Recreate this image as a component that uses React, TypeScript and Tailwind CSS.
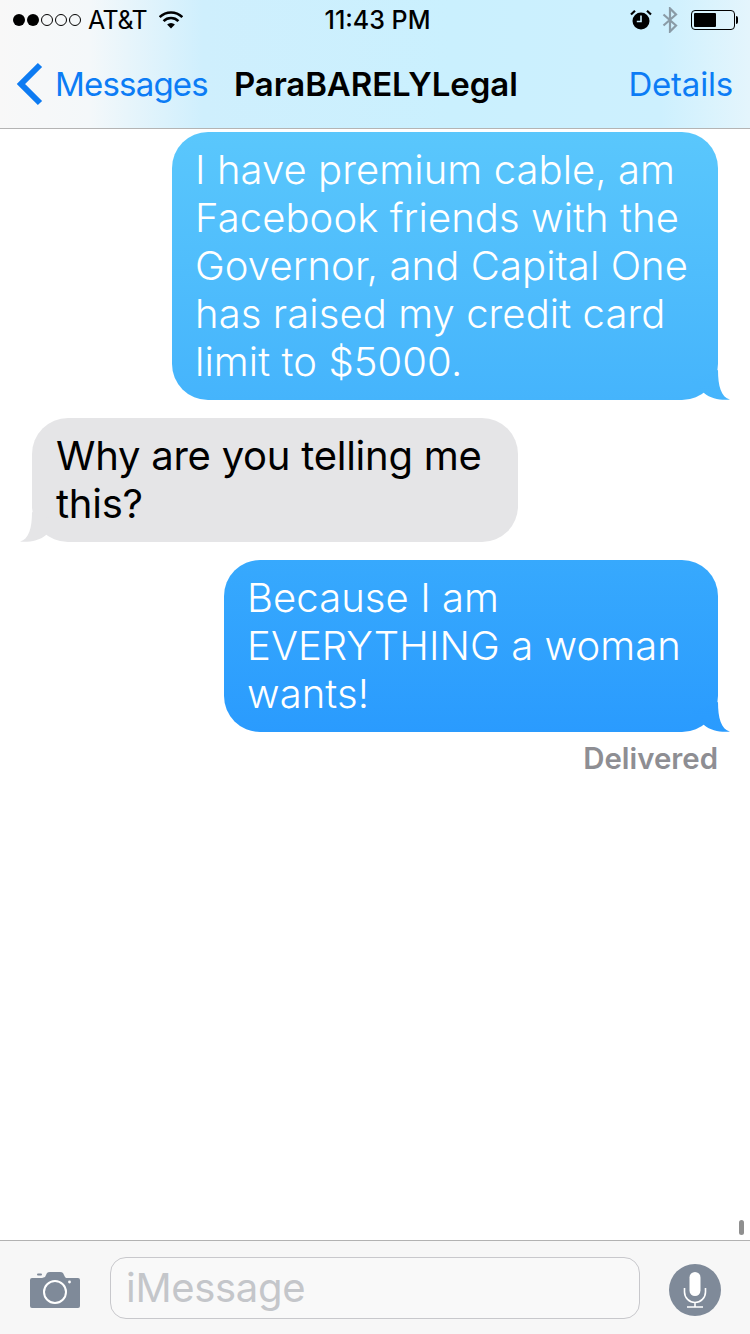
import React from 'react';

const FONT = "font-['Inter','Roboto',sans-serif]";

const StatusBar = () => (
  <div className="flex h-10 items-center justify-between pl-[13px] pr-[12px]">
    <div className="flex w-[264px] items-center">
      <div className="flex gap-[2px]">
        <span className="h-3 w-3 rounded-full bg-black" />
        <span className="h-3 w-3 rounded-full bg-black" />
        <span className="h-3 w-3 rounded-full border border-black" />
        <span className="h-3 w-3 rounded-full border border-black" />
        <span className="h-3 w-3 rounded-full border border-black" />
      </div>
      <span className="ml-[7px] text-[25px] leading-none tracking-[-0.5px] text-black">AT&amp;T</span>
      <svg className="ml-[12px]" width="24" height="18" viewBox="0 0 24 18">
        <path d="M.7 6.2A16 16 0 0 1 23.3 6.2" fill="none" stroke="#000" strokeWidth="2.6" />
        <path d="M4.6 10.1A10.5 10.5 0 0 1 19.4 10.1" fill="none" stroke="#000" strokeWidth="2.6" />
        <path d="M12 17.5 8.1 13.6A5.5 5.5 0 0 1 15.9 13.6Z" fill="#000" />
      </svg>
    </div>
    <span className="text-[25px] font-medium leading-none text-black">11:43 PM</span>
    <div className="flex w-[260px] items-center justify-end">
      <svg width="22" height="22" viewBox="0 0 22 22">
        <circle cx="11" cy="12" r="8.5" fill="#000" />
        <path d="M11 6.5V12.5H6.8" fill="none" stroke="#cdf0fe" strokeWidth="1.6" />
        <path d="M1 5.5 5 1.8M21 5.5 17 1.8" stroke="#000" strokeWidth="2.2" />
      </svg>
      <svg className="ml-[10px]" width="16" height="26" viewBox="0 0 16 26">
        <path d="M1.5 7.5 14 18.5 8 24.5V1.5L14 7.5 1.5 18.5" fill="none" stroke="#8a9ba6" strokeWidth="2.2" />
      </svg>
      <div className="ml-[13px] flex items-center">
        <div className="h-[20px] w-[44px] rounded-[4px] border border-black p-[2px]">
          <div className="h-full w-[22px] rounded-[1px] bg-black" />
        </div>
        <div className="ml-[1px] h-[8px] w-[2px] rounded-r-[2px] bg-black" />
      </div>
    </div>
  </div>
);

const NavBar = () => (
  <div className="flex h-[88px] items-center pl-4 pr-[17px] text-[33px] leading-none">
    <svg width="28" height="44" viewBox="0 0 28 44">
      <path d="M24 3 5 22l19 19" fill="none" stroke="#0d7bf2" strokeWidth="6" />
    </svg>
    <span className="ml-[11px] tracking-[-0.8px] text-[#0c7cf5]">Messages</span>
    <span className="ml-[26px] font-semibold tracking-[-0.1px] text-black">ParaBARELYLegal</span>
    <span className="ml-auto tracking-[-0.2px] text-[#0c7cf5]">Details</span>
  </div>
);

// tail is filled with the same colours the bubble has at that height
const RightTail = ({ id, from, to }: { id: string; from: string; to: string }) => (
  <svg className="absolute bottom-0 -right-3" width="40" height="30" viewBox="0 0 40 30">
    <defs>
      <linearGradient id={id} x1="0" y1="0" x2="0" y2="30" gradientUnits="userSpaceOnUse">
        <stop offset="0" stopColor={from} />
        <stop offset="1" stopColor={to} />
      </linearGradient>
    </defs>
    <path d="M28 0C28 16 31 27 40 29.6 31 30.4 21 29 14 23L0 10Z" fill={`url(#${id})`} />
  </svg>
);

const LeftTail = () => (
  <svg className="absolute bottom-0 -left-3" width="40" height="30" viewBox="0 0 40 30">
    <path d="M12 0C12 16 9 27 0 29.6 9 30.4 19 29 26 23L40 10Z" fill="#e5e5e7" />
  </svg>
);

const MessageList = () => (
  <div className="flex flex-1 flex-col pt-[3px] text-[40px] leading-[48px]">
    <div className="relative mr-8 w-[546px] self-end rounded-[36px] bg-gradient-to-b from-[#5ac7fc] to-[#45b4fc] py-[14px] pl-[23px] pr-6 font-light tracking-[0.08px] text-white">
      I have premium cable, am
      <br />
      Facebook friends with the
      <br />
      Governor, and Capital One
      <br />
      has raised my credit card
      <br />
      limit to $5000.
      <RightTail id="tail-top" from="#47b6fc" to="#45b4fc" />
    </div>
    <div className="relative ml-8 mt-[18px] w-[486px] rounded-[36px] bg-[#e5e5e7] px-6 py-[14px] tracking-[-0.25px] text-black">
      Why are you telling me
      <br />
      this?
      <LeftTail />
    </div>
    <div className="relative mr-8 mt-[18px] w-[494px] self-end rounded-[36px] bg-gradient-to-b from-[#37a9fd] to-[#2a9bfe] py-[14px] pl-[23px] pr-6 font-light tracking-[0.08px] text-white">
      Because I am
      <br />
      EVERYTHING a woman
      <br />
      wants!
      <RightTail id="tail-bottom" from="#2c9dfe" to="#2a9bfe" />
    </div>
    <div className="mr-8 mt-[10px] self-end text-[29.4px] font-semibold leading-[34px] text-[#8e8e93]">
      Delivered
    </div>
  </div>
);

const InputBar = () => (
  <div className="flex h-[94px] items-center border-t border-[#b2b2b2] bg-[#f7f7f7] pl-[30px] pr-[29px] pt-[4px]">
    <svg width="50" height="38" viewBox="0 0 50 38">
      <path d="M2 7h10l3-1 2-4q1-1 3-1h10q2 0 3 1l2 4 1 1h12q2 0 2 2v26q0 2-2 2H2q-2 0-2-2V9q0-2 2-2Z" fill="#7f8a99" />
      <rect x="7" y="2.5" width="5" height="2" rx="1" fill="#7f8a99" />
      <circle cx="25" cy="21" r="11" fill="none" stroke="#fff" strokeWidth="2" />
      <circle cx="39.5" cy="11" r="1.4" fill="#fff" />
    </svg>
    <div className="mb-[4px] ml-[30px] flex h-[62px] w-[530px] items-center rounded-[16px] border border-[#c8c8cc] bg-[#f9f9f9] pl-[15px] text-[40px] tracking-[-0.3px] text-[#c4c6ca]">
      iMessage
    </div>
    <div className="ml-[29px] flex h-[52px] w-[52px] items-center justify-center rounded-full bg-[#7f8a99]">
      <svg width="24" height="36" viewBox="0 0 24 36">
        <rect x="6.5" y="0" width="11" height="24" rx="5.5" fill="#fff" />
        <path d="M1.5 16v4a10.5 10.5 0 0 0 21 0v-4M12 30.5V35M4 35h16" fill="none" stroke="#fff" strokeWidth="1.6" />
      </svg>
    </div>
  </div>
);

const App: React.FC = () => (
  <div className={`relative flex h-[1334px] w-[750px] flex-col overflow-hidden bg-white ${FONT}`}>
    <div className="h-[129px] border-b border-[#b4b4b4] bg-[linear-gradient(90deg,#f8f8f8_0%,#f4f8fa_12%,#cfeffd_27%,#caf0fe_60%,#cdf0fe_88%,#e4f5fc_100%)]">
      <StatusBar />
      <NavBar />
    </div>
    <MessageList />
    <InputBar />
    {/* scroll indicator */}
    <div className="absolute left-[739px] top-[1220px] h-[15px] w-[5px] rounded-full bg-[#8f8f8f]" />
  </div>
);

export default App;
